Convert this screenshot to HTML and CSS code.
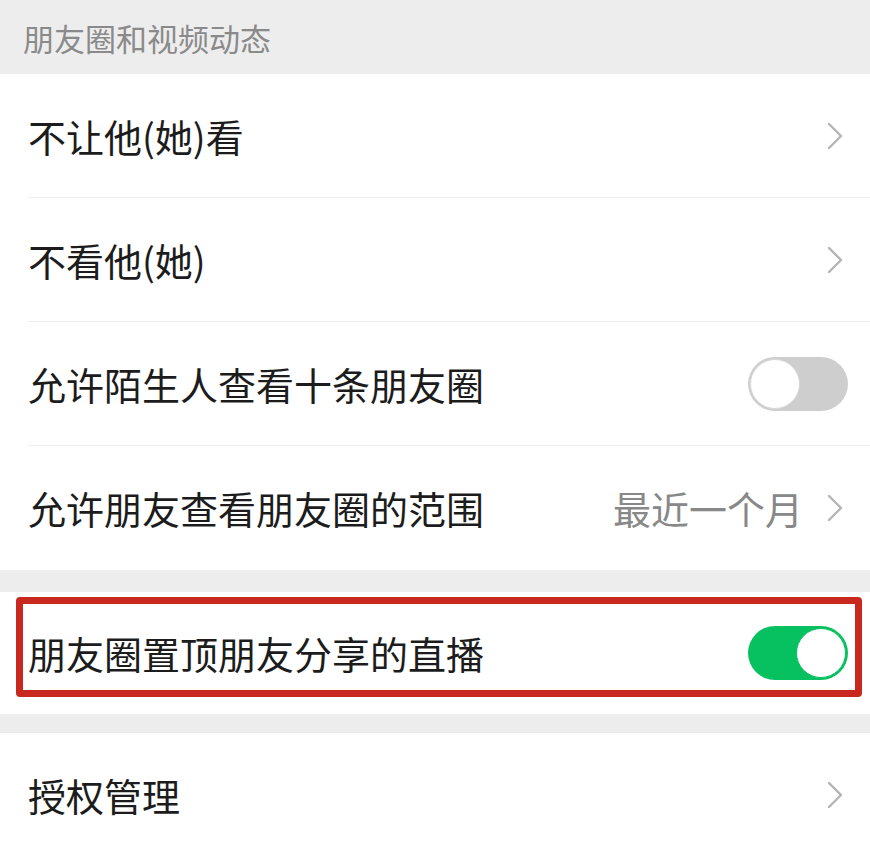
FILE: index.html
```html
<!DOCTYPE html>
<html lang="zh-CN">

<head>
  <meta charset="UTF-8" />
  <meta name="viewport" content="width=device-width, initial-scale=1.0" />
  <title>朋友圈和视频动态</title>
  <link rel="stylesheet" href="styles.css">
</head>

<body>
  <div class="section-title">朋友圈和视频动态</div>

  <div class="group">
    <div class="cell">
      <div class="cell-body">
        <span class="label">不让他(她)看</span>
        <svg class="arrow" viewBox="0 0 16 28"><polyline points="2,2 14,14 2,26" /></svg>
      </div>
    </div>
    <div class="cell">
      <div class="cell-body">
        <span class="label">不看他(她)</span>
        <svg class="arrow" viewBox="0 0 16 28"><polyline points="2,2 14,14 2,26" /></svg>
      </div>
    </div>
    <div class="cell">
      <div class="cell-body">
        <span class="label">允许陌生人查看十条朋友圈</span>
        <span class="switch"></span>
      </div>
    </div>
    <div class="cell">
      <div class="cell-body">
        <span class="label">允许朋友查看朋友圈的范围</span>
        <span class="value">最近一个月</span>
        <svg class="arrow" viewBox="0 0 16 28"><polyline points="2,2 14,14 2,26" /></svg>
      </div>
    </div>
  </div>

  <div class="group">
    <div class="cell cell-tall">
      <div class="cell-body">
        <span class="label">朋友圈置顶朋友分享的直播</span>
        <span class="switch on"></span>
      </div>
      <!-- annotation frame drawn over the row -->
      <div class="highlight"></div>
    </div>
  </div>

  <div class="group group-last">
    <div class="cell">
      <div class="cell-body">
        <span class="label">授权管理</span>
        <svg class="arrow" viewBox="0 0 16 28"><polyline points="2,2 14,14 2,26" /></svg>
      </div>
    </div>
  </div>
</body>

</html>
```

FILE: styles.css
```css
body {
  margin: 0;
  background: #ededed;
  font-family: "Noto Sans CJK SC", "Noto Sans", sans-serif;
  color: #1c1c1c;
  overflow: hidden;
}

.section-title {
  height: 74px;
  box-sizing: border-box;
  padding: 16px 0 0 23px;
  font-size: 31px;
  line-height: 44px;
  color: #8a8a8a;
}

.group {
  background: #fff;
  margin-bottom: 22px;
}

.group-last {
  margin-top: -3px;
  margin-bottom: 0;
  min-height: 120px;
}

.cell {
  position: relative;
  padding-left: 28px;
}

.cell-body {
  display: flex;
  align-items: center;
  height: 123px;
  border-bottom: 1px solid #efefef;
  padding-right: 27px;
}

/* last row of a group has no divider */
.cell:last-child .cell-body {
  border-bottom: none;
  height: 124px;
}

.cell-tall .cell-body,
.cell-tall:last-child .cell-body {
  height: 122px;
}

.label {
  flex: 1;
  font-size: 38px;
  line-height: 50px;
}

.value {
  font-size: 38px;
  line-height: 50px;
  color: #888;
  margin-right: 24px;
}

.arrow {
  width: 16px;
  height: 28px;
  fill: none;
  stroke: #b4b4b4;
  stroke-width: 2.4;
  stroke-linecap: round;
  stroke-linejoin: round;
}

/* switch */
.switch {
  position: relative;
  width: 100px;
  height: 54px;
  border-radius: 27px;
  background: #cecece;
  margin-right: -5px;
}

.switch::after {
  content: "";
  position: absolute;
  top: 2px;
  left: 2px;
  width: 48px;
  height: 48px;
  border-radius: 50%;
  background: #fff;
  border: 1px solid #d8d8d8;
}

.switch.on {
  background: #07c160;
}

.switch.on::after {
  left: auto;
  right: 2px;
  border-color: #07c160;
}

.highlight {
  position: absolute;
  left: 16px;
  top: 5px;
  width: 846px;
  height: 100px;
  box-sizing: border-box;
  border: 7px solid #c9281f;
  border-radius: 4px;
}
```
